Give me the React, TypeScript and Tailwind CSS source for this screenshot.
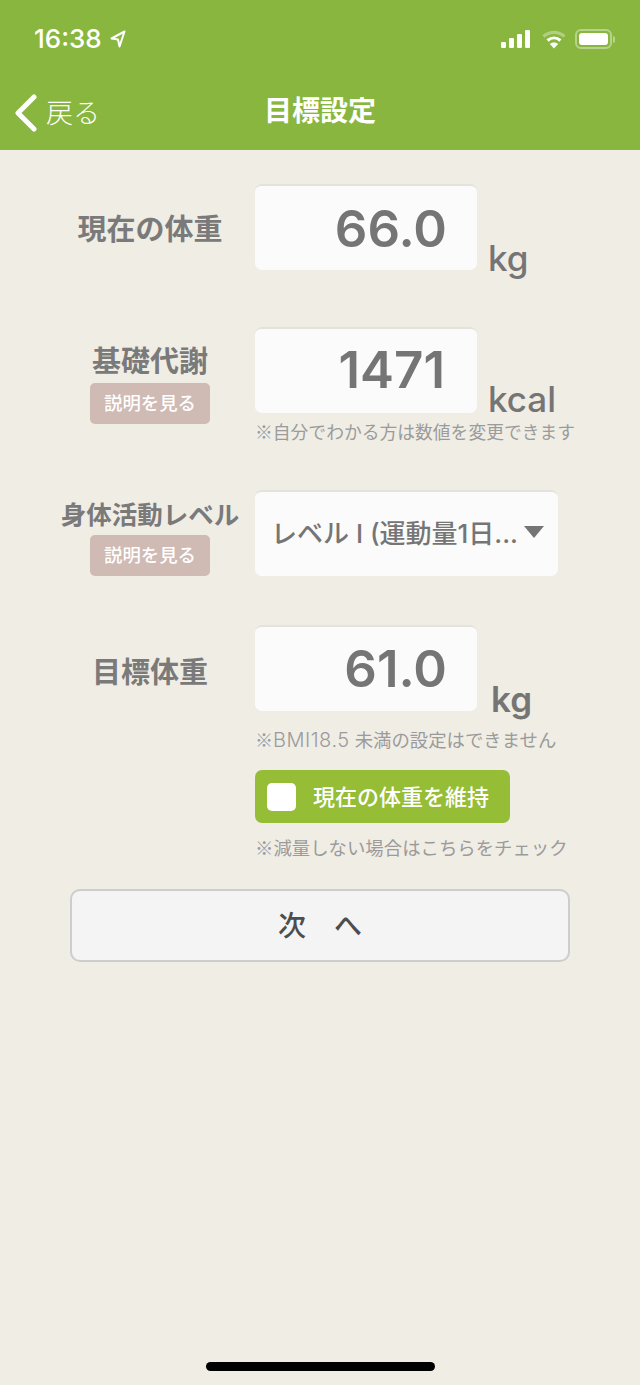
const labelClass = "text-[29px] leading-[30px] font-semibold text-[#7a7a7a] whitespace-nowrap"
const noteClass = "font-['Noto_Sans_CJK_JP'] leading-[22px] text-[#9b9b9b] whitespace-nowrap"

function StatusIcons() {
  return (
    <div className="flex items-center">
      <svg width="30" height="20" viewBox="0 0 30 20" fill="#fff">
        <rect x="1" y="13" width="5" height="6" rx="1.2" />
        <rect x="9" y="9" width="5" height="10" rx="1.2" />
        <rect x="17" y="5" width="5" height="14" rx="1.2" />
        <rect x="25" y="1" width="5" height="18" rx="1.2" />
      </svg>
      <svg className="ml-[10px]" width="28" height="19" viewBox="0 0 24 19" fill="none">
        <path d="M1.5 6.5C7.5 1 16.5 1 22.5 6.5" stroke="#fff" strokeOpacity="0.35" strokeWidth="3.2" />
        <path d="M5.5 10.5C9.5 7 14.5 7 18.5 10.5" stroke="#fff" strokeWidth="3" />
        <path d="M12 18.5L7.8 14C10.2 12 13.8 12 16.2 14Z" fill="#fff" />
      </svg>
      <div className="ml-[7px] w-[37px] h-[20px] rounded-[6px] border-2 border-white/40 p-[2px]">
        <div className="w-full h-full rounded-[3px] bg-white" />
      </div>
      <div className="ml-[1px] w-[2px] h-[7px] rounded-r-full bg-white/40" />
    </div>
  )
}

function NumberRow({ value, valueClass, unit, unitClass, className, children }: { value: string; valueClass: string; unit: string; unitClass: string; className: string; children: React.ReactNode }) {
  return (
    <div className={`flex ${className}`}>
      <div className="w-[210px] shrink-0 flex flex-col items-center">{children}</div>
      <div className="w-[222px] h-[86px] rounded-[7px] bg-[#fbfbfb] border-t-2 border-[#e4e2dc] flex items-center justify-end">
        <span className={`text-[51px] leading-none font-semibold text-[#757575] ${valueClass}`}>{value}</span>
      </div>
      <span className={unitClass}>{unit}</span>
    </div>
  )
}

function HelpButton({ className }: { className: string }) {
  return (
    <button className={`w-[120px] h-[41px] rounded-[5px] bg-[#cfbab4] text-white text-[18.4px] font-medium flex items-center justify-center ${className}`}>
      説明を見る
    </button>
  )
}

export default function App() {
  return (
    <div
      className="w-[640px] h-[1385px] bg-[#f0ede5] flex flex-col overflow-hidden"
      style={{ fontFamily: 'Inter, "Noto Sans CJK JP", sans-serif' }}
    >
      <header className="h-[150px] shrink-0 bg-[#88b63e] text-white">
        <div className="h-[78px] flex items-center justify-between pl-[34px] pr-[25px]">
          <div className="flex items-center">
            <span className="text-[26px] font-medium leading-none">16:38</span>
            <svg className="ml-[7px]" width="18" height="18" viewBox="0 0 16 18" fill="none">
              <path d="M14.5 1.5L1.5 8.5L8 9.5L9.5 16.5Z" stroke="#fff" strokeWidth="2" strokeLinejoin="round" />
            </svg>
          </div>
          <StatusIcons />
        </div>
        <div className="relative h-[72px] flex items-center justify-center">
          <div className="absolute left-[14px] top-[16px] flex items-center">
            <svg width="24" height="38" viewBox="0 0 24 38" fill="none">
              <path d="M20 3L4 19L20 35" stroke="#fff" strokeWidth="5" strokeLinecap="round" strokeLinejoin="round" />
            </svg>
            <span className="ml-[8px] text-[27px] leading-none font-light">戻る</span>
          </div>
          <h1 className="text-[28px] font-bold leading-none mt-[-6px]">目標設定</h1>
        </div>
      </header>

      <main className="pl-[45px] pt-[34px] flex flex-col">
        <NumberRow
          className="h-[86px]"
          value="66.0"
          valueClass="mr-[30px]"
          unit="kg"
          unitClass="ml-[11px] self-end text-[35px] leading-[32px] mb-[-4px] font-medium text-[#757575]"
        >
          <span className={`${labelClass} mt-[31px]`}>現在の体重</span>
        </NumberRow>

        <NumberRow
          className="h-[97px] mt-[57px]"
          value="1471"
          valueClass="mr-[32px] mt-[-4px]"
          unit="kcal"
          unitClass="ml-[11px] self-end text-[35px] leading-[32px] mb-[9px] font-medium text-[#757575]"
        >
          <span className={`${labelClass} mt-[20px]`}>基礎代謝</span>
          <HelpButton className="mt-[6px]" />
        </NumberRow>
        <p className={`${noteClass} text-[17.8px] ml-[210px] mt-[-4px]`}>※自分でわかる方は数値を変更できます</p>

        <div className="flex mt-[48px]">
          <div className="w-[210px] shrink-0 flex flex-col items-center">
            <span className="text-[25.5px] leading-[30px] font-semibold text-[#7a7a7a] whitespace-nowrap mt-[10px]">身体活動レベル</span>
            <HelpButton className="mt-[5px]" />
          </div>
          <div className="w-[303px] h-[86px] rounded-[7px] bg-[#fbfbfb] border-t-2 border-[#e4e2dc] flex items-center pl-[16px] pr-[14px]">
            <span className="flex-1 text-[26px] leading-none font-medium text-[#757575] whitespace-nowrap">レベル I (運動量1日...</span>
            <svg width="20" height="12" viewBox="0 0 20 12" fill="#757575" className="mt-[-4px]">
              <path d="M0 0H20L10 12Z" />
            </svg>
          </div>
        </div>

        <NumberRow
          className="h-[86px] mt-[49px]"
          value="61.0"
          valueClass="mr-[30px] mt-[-2px]"
          unit="kg"
          unitClass="ml-[14px] self-end text-[35px] leading-[32px] mb-[-4px] font-semibold text-[#757575]"
        >
          <span className={`${labelClass} mt-[33px]`}>目標体重</span>
        </NumberRow>
        <p className={`${noteClass} text-[18px] ml-[210px] mt-[17px]`}>
          ※<span className="font-['Inter'] text-[20px] font-light tracking-[0.5px]">BMI18.5</span>
          <span className="ml-[5px] text-[18.4px]">未満の設定はできません</span>
        </p>

        <button className="ml-[210px] mt-[19px] w-[255px] h-[53px] rounded-[7px] bg-[#96bd36] flex items-center pl-[12px]">
          <span className="w-[29px] h-[28px] rounded-[5px] bg-white" />
          <span className="ml-[17px] text-[22px] font-medium leading-none text-white whitespace-nowrap">現在の体重を維持</span>
        </button>
        <p className={`${noteClass} text-[18.4px] ml-[210px] mt-[13px]`}>※減量しない場合はこちらをチェック</p>

        <button className="ml-[25px] mt-[31px] w-[500px] h-[73px] rounded-[10px] bg-[#f4f4f4] border-2 border-[#cdcdcd] flex items-center justify-center text-[28px] font-medium text-[#4d4d4d]">
          次　へ
        </button>
      </main>

      <div className="mt-auto mb-[14px] mx-auto w-[229px] h-[9px] rounded-full bg-black" />
    </div>
  )
}
